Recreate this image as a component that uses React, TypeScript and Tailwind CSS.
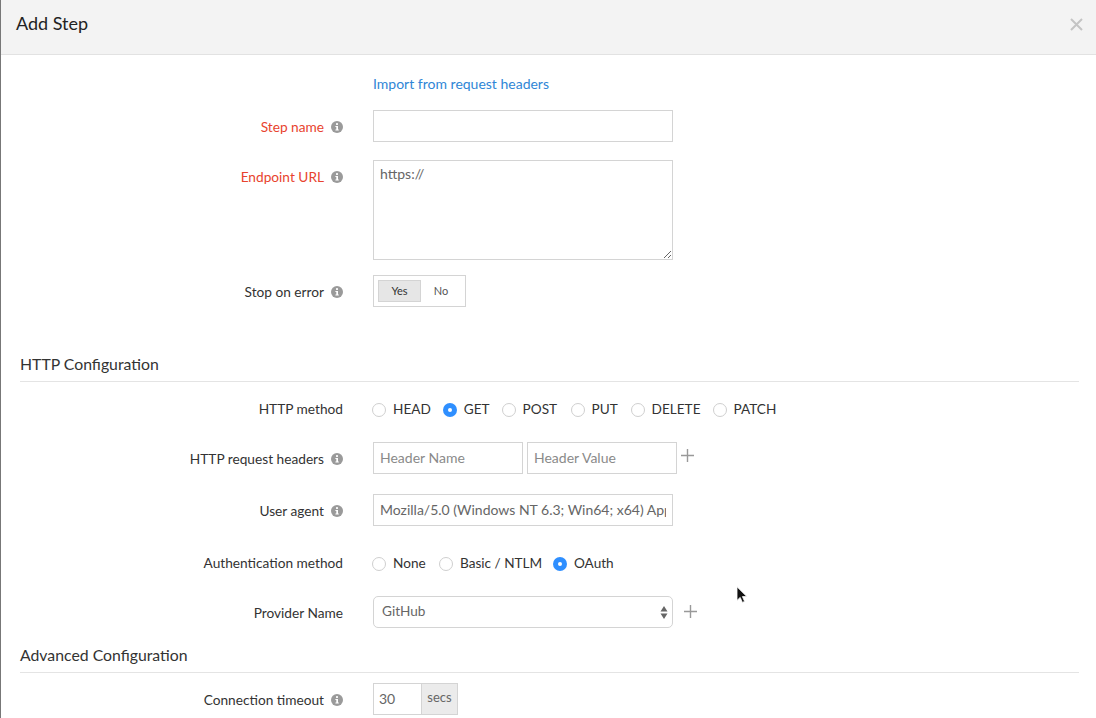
import React from 'react';

const InfoIcon: React.FC = () => (
  <svg width="12" height="12" viewBox="0 0 12 12" className="shrink-0">
    <circle cx="6" cy="6" r="6" fill="#9a9a9a" />
    <rect x="5" y="2.2" width="2" height="1.7" fill="#fff" />
    <path d="M4.4 5h2.6v3.6h.8v1H4.4v-1h.9V6h-.9z" fill="#fff" />
  </svg>
);

const PlusIcon: React.FC = () => (
  <svg width="13" height="13" viewBox="0 0 13 13" className="shrink-0">
    <path d="M6.5 0v13M0 6.5h13" stroke="#999" strokeWidth="1.4" fill="none" />
  </svg>
);

const Label: React.FC<{ text: string; info?: boolean; required?: boolean }> = ({ text, info, required }) => (
  <div className="w-[342px] shrink-0 pt-[2px] flex items-center justify-end gap-[7px]">
    <span className={`text-[13.7px] ${required ? 'text-[#e8432e]' : 'text-[#333]'}`}>{text}</span>
    {info && <InfoIcon />}
  </div>
);

const Radio: React.FC<{ label: string; checked?: boolean; labelCls?: string }> = ({ label, checked, labelCls }) => (
  <div className="flex items-center gap-[7px]">
    {checked ? (
      <span className="mt-[1px] w-[14px] h-[14px] rounded-full bg-[#2f8fff] flex items-center justify-center">
        <span className="w-[4px] h-[4px] rounded-full bg-white" />
      </span>
    ) : (
      <span className="mt-[1px] w-[14px] h-[14px] rounded-full border border-[#cfcfcf] bg-white" />
    )}
    <span className={`text-[13.6px] text-[#333] whitespace-nowrap ${labelCls ?? ''}`}>{label}</span>
  </div>
);

const SectionTitle: React.FC<{ title: string }> = ({ title }) => (
  <div className="ml-[19px] mr-[17px] h-[27px] border-b border-[#e4e4e4] text-[15.8px] leading-[18px] text-[#333]">{title}</div>
);

const inputCls =
  "h-[32px] border border-[#d4d4d4] bg-white pl-[6px] pr-[6px] pb-[2px] text-[14px] text-[#666] placeholder:text-[#8a8a8a] outline-none";

export default function App() {
  return (
    <div
      className="w-[1096px] h-[718px] overflow-hidden bg-white border-l border-[#777] relative"
      style={{ fontFamily: 'Lato, "Noto Sans", sans-serif' }}
    >
      <div className="h-[55px] bg-[#f3f3f3] border-b border-[#e2e2e2] flex items-center justify-between pl-[15px] pr-[13px] pb-[6px]">
        <h1 className="text-[18px] text-[#222] mb-[2px]">Add Step</h1>
        <svg width="13" height="13" viewBox="0 0 13 13">
          <path d="M1 1l11 11M12 1L1 12" stroke="#c4c4c4" strokeWidth="2" />
        </svg>
      </div>

      <div className="pl-[372px] mt-[18px] h-[20px] flex items-center">
        <a className="text-[14px] text-[#2f86d6]">Import from request headers</a>
      </div>

      <div className="flex mt-[17px] gap-[30px]">
        <Label text="Step name" info required />
        <input className={`${inputCls} w-[300px]`} />
      </div>

      <div className="flex mt-[18px] gap-[30px]">
        <div className="h-[32px] flex"><Label text="Endpoint URL" info required /></div>
        <textarea className={`${inputCls} w-[300px] h-[100px] pt-[2px]`} defaultValue="https://" />
      </div>

      <div className="flex mt-[15px] gap-[30px]">
        <Label text="Stop on error" info />
        <div className="w-[93px] h-[32px] border border-[#d4d4d4] flex items-center pl-[4px] text-[11px]">
          <span className="w-[43px] h-[22px] bg-[#e6e6e6] border border-[#d4d4d4] flex items-center justify-center text-[#333]">Yes</span>
          <span className="w-[40px] text-center text-[#555]">No</span>
        </div>
      </div>

      <div className="mt-[48px]"><SectionTitle title="HTTP Configuration" /></div>

      <div className="flex mt-[16px] h-[20px] gap-[29px]">
        <Label text="HTTP method" />
        <div className="flex items-center gap-[12px] pt-[2px]">
          <Radio label="HEAD" />
          <Radio label="GET" checked />
          <Radio label="POST" labelCls="w-[36px]" />
          <Radio label="PUT" labelCls="w-[27px]" />
          <Radio label="DELETE" />
          <Radio label="PATCH" />
        </div>
      </div>

      <div className="flex mt-[24px] gap-[30px]">
        <Label text="HTTP request headers" info />
        <div className="flex items-center gap-[4px]">
          <input className={`${inputCls} w-[150px]`} placeholder="Header Name" />
          <input className={`${inputCls} w-[150px]`} placeholder="Header Value" />
          <span className="mb-[5px]"><PlusIcon /></span>
        </div>
      </div>

      <div className="flex mt-[20px] gap-[30px]">
        <Label text="User agent" info />
        <input className={`${inputCls} w-[300px] text-[13.7px]`} defaultValue="Mozilla/5.0 (Windows NT 6.3; Win64; x64) AppleWebKit/537.36" />
      </div>

      <div className="flex mt-[26px] h-[20px] gap-[29px]">
        <Label text="Authentication method" />
        <div className="flex items-center gap-[12px] pt-[2px]">
          <Radio label="None" labelCls="w-[34px]" />
          <Radio label="Basic / NTLM" labelCls="w-[81px]" />
          <Radio label="OAuth" checked />
        </div>
      </div>

      <div className="flex mt-[24px] gap-[30px]">
        <Label text="Provider Name" />
        <div className="flex items-center gap-[10px]">
          <div className="w-[300px] h-[32px] border border-[#d4d4d4] rounded-[5px] flex items-center justify-between pl-[8px] pr-[4px] pb-[2px] text-[13.6px] text-[#666]">
            <span>GitHub</span>
            <svg width="8" height="15" viewBox="0 0 8 15" className="mt-[2px]">
              <path d="M4 1l3.5 5.5h-7zM4 14L.5 8.5h7z" fill="#666" />
            </svg>
          </div>
          <span className="ml-[1px] mb-[2px]"><PlusIcon /></span>
        </div>
      </div>

      <div className="mt-[18px]"><SectionTitle title="Advanced Configuration" /></div>

      <div className="flex mt-[10px] gap-[30px]">
        <Label text="Connection timeout" info />
        <div className="flex h-[32px]">
          <span className="w-[49px] border border-[#d4d4d4] pl-[5px] pb-[2px] flex items-center text-[14px] text-[#666]">30</span>
          <span className="w-[37px] -ml-px border border-[#d4d4d4] bg-[#ebebeb] pb-[2px] flex items-center justify-center text-[13px] text-[#666]">secs</span>
        </div>
      </div>

      <svg width="12" height="18" viewBox="0 0 12 18" className="absolute left-[735px] top-[586px]">
        <path d="M1 0.8v13.6l3.2-3 2.2 5 2.2-1-2.2-4.8h4.4z" fill="#111" stroke="#fff" strokeWidth="0.8" />
      </svg>
    </div>
  );
}
